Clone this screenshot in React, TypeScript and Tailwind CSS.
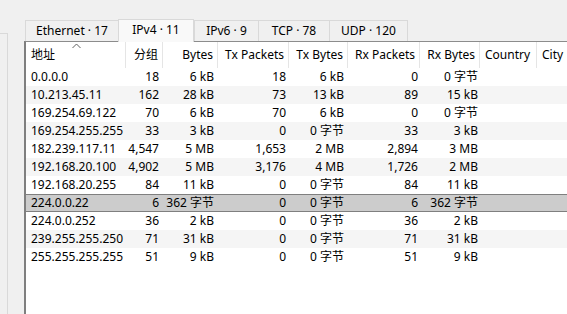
import React from 'react';

type Row = {
  addr: string;
  packets: string;
  bytes: string;
  txPackets: string;
  txBytes: string;
  rxPackets: string;
  rxBytes: string;
};

const rows: Row[] = [
  { addr: '0.0.0.0', packets: '18', bytes: '6 kB', txPackets: '18', txBytes: '6 kB', rxPackets: '0', rxBytes: '0 字节' },
  { addr: '10.213.45.11', packets: '162', bytes: '28 kB', txPackets: '73', txBytes: '13 kB', rxPackets: '89', rxBytes: '15 kB' },
  { addr: '169.254.69.122', packets: '70', bytes: '6 kB', txPackets: '70', txBytes: '6 kB', rxPackets: '0', rxBytes: '0 字节' },
  { addr: '169.254.255.255', packets: '33', bytes: '3 kB', txPackets: '0', txBytes: '0 字节', rxPackets: '33', rxBytes: '3 kB' },
  { addr: '182.239.117.11', packets: '4,547', bytes: '5 MB', txPackets: '1,653', txBytes: '2 MB', rxPackets: '2,894', rxBytes: '3 MB' },
  { addr: '192.168.20.100', packets: '4,902', bytes: '5 MB', txPackets: '3,176', txBytes: '4 MB', rxPackets: '1,726', rxBytes: '2 MB' },
  { addr: '192.168.20.255', packets: '84', bytes: '11 kB', txPackets: '0', txBytes: '0 字节', rxPackets: '84', rxBytes: '11 kB' },
  { addr: '224.0.0.22', packets: '6', bytes: '362 字节', txPackets: '0', txBytes: '0 字节', rxPackets: '6', rxBytes: '362 字节' },
  { addr: '224.0.0.252', packets: '36', bytes: '2 kB', txPackets: '0', txBytes: '0 字节', rxPackets: '36', rxBytes: '2 kB' },
  { addr: '239.255.255.250', packets: '71', bytes: '31 kB', txPackets: '0', txBytes: '0 字节', rxPackets: '71', rxBytes: '31 kB' },
  { addr: '255.255.255.255', packets: '51', bytes: '9 kB', txPackets: '0', txBytes: '0 字节', rxPackets: '51', rxBytes: '9 kB' },
];

const tabs = [
  { label: 'Ethernet · 17', w: 'w-[93px]' },
  { label: 'IPv4 · 11', w: 'w-[76px]', active: true },
  { label: 'IPv6 · 9', w: 'w-[64px]' },
  { label: 'TCP · 78', w: 'w-[71px]' },
  { label: 'UDP · 120', w: 'w-[79px]' },
];

const SELECTED = 7;

export default function App() {
  return (
    <div
      className="w-[567px] h-[314px] overflow-hidden bg-[#f0f0f0] text-[12px] text-black flex"
      style={{ fontFamily: '"Noto Sans", "Noto Sans CJK SC", sans-serif' }}
    >
      {/* left neighbour panel edge */}
      <div className="w-[8px] mt-[33px] border-t border-r border-[#d9d9d9] shrink-0" />

      <div className="flex-1 flex flex-col pl-[16px] min-w-0">
        {/* Tabs */}
        <div className="flex items-end h-[41px] pl-[1px]">
          {tabs.map((t) =>
            t.active ? (
              <div
                key={t.label}
                className={`${t.w} h-[23px] -mb-px flex items-center justify-center bg-[#f9f9f9] border-t border-x border-[#d9d9d9] z-10 pb-[3px]`}
              >
                {t.label}
              </div>
            ) : (
              <div
                key={t.label}
                className={`${t.w} h-[21px] flex items-center justify-center bg-[#f0f0f0] border-t border-l border-[#d9d9d9] last:border-r`}
              >
                {t.label}
              </div>
            )
          )}
        </div>

        {/* Table */}
        <div className="flex-1 bg-white border-t border-l-2 border-[#8c8c8c] border-l-[#7f7f7f]">
          {/* Header */}
          <div className="relative flex h-[26px] items-center whitespace-nowrap">
            <svg className="absolute left-[46px] top-[1px]" width="9" height="6" viewBox="0 0 9 6">
              <path d="M0.5 5 L4.5 1 L8.5 5" fill="none" stroke="#606060" strokeWidth="1" />
            </svg>
            <div className="w-[100px] pl-[5px] h-full flex items-center border-r border-[#e5e5e5]">地址</div>
            <div className="w-[37px] pr-[4px] h-full flex items-center justify-end border-r border-[#e5e5e5]">分组</div>
            <div className="w-[55px] pr-[4px] h-full flex items-center justify-end border-r border-[#e5e5e5]">Bytes</div>
            <div className="w-[71px] pr-[4px] h-full flex items-center justify-end border-r border-[#e5e5e5]">Tx Packets</div>
            <div className="w-[59px] pr-[4px] h-full flex items-center justify-end border-r border-[#e5e5e5]">Tx Bytes</div>
            <div className="w-[72px] pr-[4px] h-full flex items-center justify-end border-r border-[#e5e5e5]">Rx Packets</div>
            <div className="w-[60px] pr-[4px] h-full flex items-center justify-end border-r border-[#e5e5e5]">Rx Bytes</div>
            <div className="w-[57px] pl-[5px] h-full flex items-center border-r border-[#e5e5e5]">Country</div>
            <div className="pl-[5px] h-full flex items-center">City</div>
          </div>

          {/* Rows */}
          {rows.map((r, i) => {
            const bg =
              i === SELECTED
                ? 'bg-[#cccccc] border-y border-[#7f7f7f]'
                : i % 2 === 1
                ? 'bg-[#f5f5f5]'
                : 'bg-white';
            return (
              <div key={r.addr} className={`flex h-[18px] items-center whitespace-nowrap ${bg}`}>
                <div className="w-[100px] pl-[5px]">{r.addr}</div>
                <div className="w-[37px] pr-[4px] text-right">{r.packets}</div>
                <div className="w-[55px] pr-[4px] text-right">{r.bytes}</div>
                <div className="w-[71px] pr-[3px] text-right">{r.txPackets}</div>
                <div className="w-[59px] pr-[4px] text-right">{r.txBytes}</div>
                <div className="w-[72px] pr-[2px] text-right">{r.rxPackets}</div>
                <div className="w-[60px] pr-[2px] text-right">{r.rxBytes}</div>
              </div>
            );
          })}
        </div>
      </div>
    </div>
  );
}
